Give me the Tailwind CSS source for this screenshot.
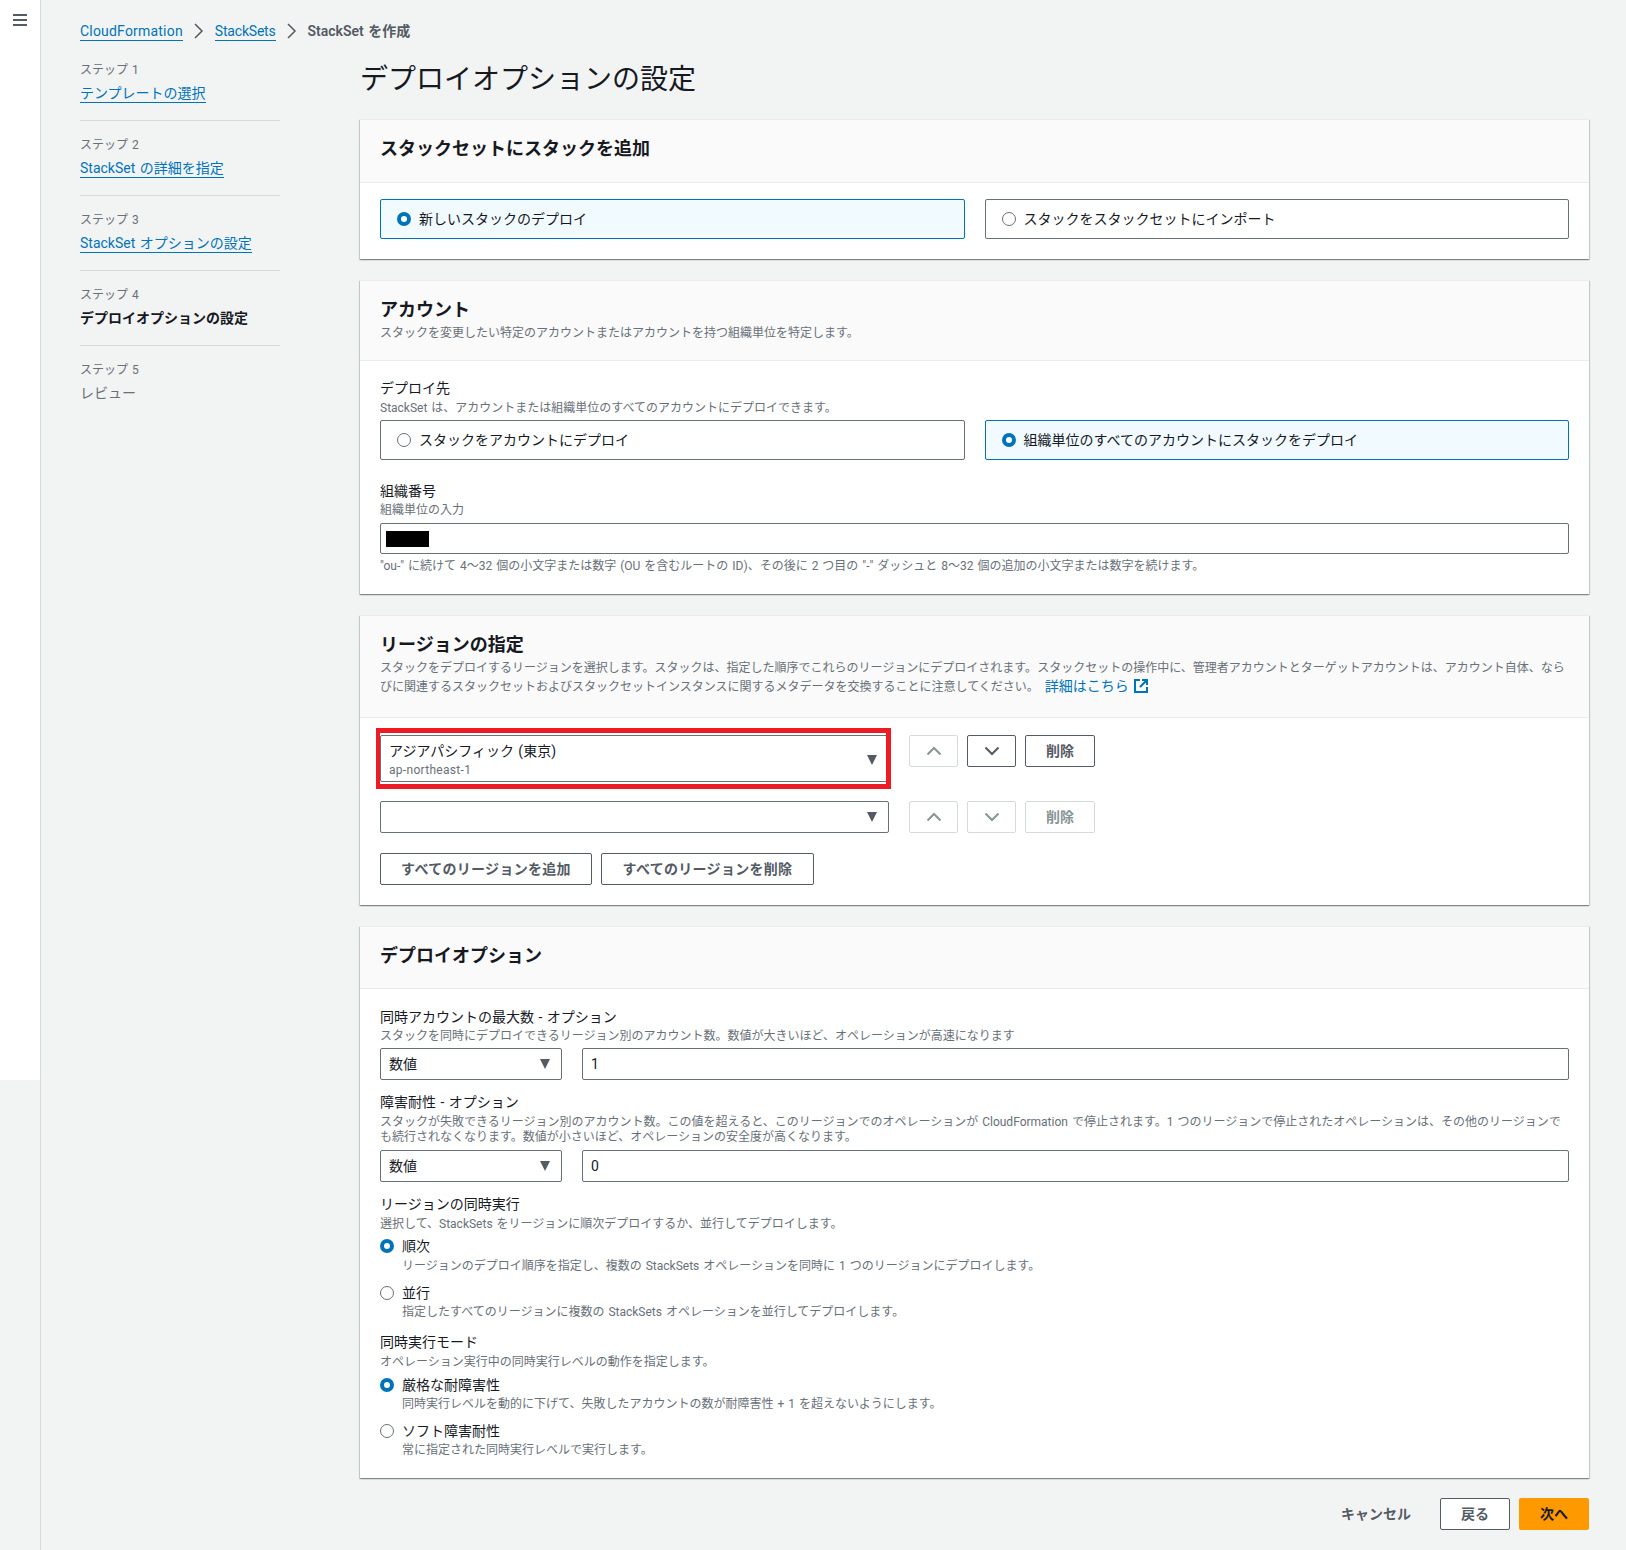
<!DOCTYPE html>
<html lang="ja">
<head>
    <meta charset="UTF-8">
    <meta name="viewport" content="width=device-width, initial-scale=1.0">
    <script src="https://cdn.jsdelivr.net/npm/@tailwindcss/browser@4"></script>
    <title>StackSet を作成</title>
</head>
<body class="bg-[#f2f3f3] text-[14px] leading-[20px] [word-spacing:1px] text-[#16191f] font-['Roboto','Noto_Sans_CJK_JP',sans-serif]">
    <div class="flex h-[1550px] overflow-hidden">
        <!-- Side rail -->
        <aside class="w-[41px] shrink-0 border-r border-[#d5dbdb]">
            <div class="h-[1080px] bg-white pt-[14px] pl-[13px]">
                <svg width="14" height="12" viewBox="0 0 14 12" fill="#545b64"><rect width="14" height="2"/><rect y="5" width="14" height="2"/><rect y="10" width="14" height="2"/></svg>
            </div>
        </aside>

        <div class="flex-1 pl-[39px] pr-[37px]">
            <!-- Breadcrumb -->
            <nav class="flex items-center h-[20px] mt-[21px]">
                <a href="#" class="leading-[18px] tracking-[0.2px] border-b border-[#0073bb] text-[#0073bb]">CloudFormation</a>
                <svg class="mx-[11px]" width="10" height="16" viewBox="0 0 10 16" fill="none" stroke="#545b64" stroke-width="1.5"><path d="M1 1l7 7-7 7"/></svg>
                <a href="#" class="leading-[18px] tracking-[-0.2px] border-b border-[#0073bb] text-[#0073bb]">StackSets</a>
                <svg class="mx-[11px]" width="10" height="16" viewBox="0 0 10 16" fill="none" stroke="#545b64" stroke-width="1.5"><path d="M1 1l7 7-7 7"/></svg>
                <span class="font-semibold text-[#545b64]">StackSet を作成</span>
            </nav>

            <div class="flex mt-[18px]">
                <!-- Wizard steps -->
                <ol class="w-[200px] shrink-0 mr-[80px]">
                    <li class="h-[62px] pt-[1px] border-b border-[#d5dbdb]">
                        <div class="text-[12px] text-[#687078]">ステップ 1</div>
                        <a href="#" class="inline-block mt-[4px] leading-[18px] border-b border-[#0073bb] text-[#0073bb]">テンプレートの選択</a>
                    </li>
                    <li class="h-[75px] pt-[14px] border-b border-[#d5dbdb]">
                        <div class="text-[12px] text-[#687078]">ステップ 2</div>
                        <a href="#" class="inline-block mt-[4px] leading-[18px] border-b border-[#0073bb] text-[#0073bb]">StackSet の詳細を指定</a>
                    </li>
                    <li class="h-[75px] pt-[14px] border-b border-[#d5dbdb]">
                        <div class="text-[12px] text-[#687078]">ステップ 3</div>
                        <a href="#" class="inline-block mt-[4px] leading-[18px] border-b border-[#0073bb] text-[#0073bb]">StackSet オプションの設定</a>
                    </li>
                    <li class="h-[75px] pt-[14px] border-b border-[#d5dbdb]">
                        <div class="text-[12px] text-[#687078]">ステップ 4</div>
                        <div class="mt-[3px] font-semibold">デプロイオプションの設定</div>
                    </li>
                    <li class="pt-[14px]">
                        <div class="text-[12px] text-[#687078]">ステップ 5</div>
                        <div class="mt-[3px] text-[#687078]">レビュー</div>
                    </li>
                </ol>

                <main class="flex-1 min-w-0">
                    <h1 class="h-[38px] text-[28px] leading-[42px] font-normal">デプロイオプションの設定</h1>

                    <!-- Add stacks -->
                    <section class="mt-[22px] bg-white border-t border-[#eaeded] shadow-[0_1px_1px_0_rgba(0,28,36,0.3),1px_1px_1px_0_rgba(0,28,36,0.15),-1px_1px_1px_0_rgba(0,28,36,0.15)]">
                        <header class="h-[63px] pt-[19px] px-[20px] bg-[#fafafa] border-b border-[#eaeded]">
                            <h2 class="text-[18px] leading-[20px] font-bold">スタックセットにスタックを追加</h2>
                        </header>
                        <div class="px-[20px] pt-[16px] pb-[20px] grid grid-cols-2 gap-[20px]">
                            <label class="flex items-center gap-[8px] h-[40px] pl-[16px] rounded-[2px] border border-[#0073bb] bg-[#f1faff]">
                                <span class="w-[14px] h-[14px] rounded-full bg-white border-[4px] border-[#0073bb]"></span>新しいスタックのデプロイ
                            </label>
                            <label class="flex items-center gap-[8px] h-[40px] pl-[16px] rounded-[2px] border border-[#687078]">
                                <span class="w-[14px] h-[14px] rounded-full bg-white border-[1.5px] border-[#687078]"></span>スタックをスタックセットにインポート
                            </label>
                        </div>
                    </section>

                    <!-- Accounts -->
                    <section class="mt-[21px] bg-white border-t border-[#eaeded] shadow-[0_1px_1px_0_rgba(0,28,36,0.3),1px_1px_1px_0_rgba(0,28,36,0.15),-1px_1px_1px_0_rgba(0,28,36,0.15)]">
                        <header class="h-[80px] pt-[19px] px-[20px] bg-[#fafafa] border-b border-[#eaeded]">
                            <h2 class="text-[18px] leading-[20px] font-bold">アカウント</h2>
                            <p class="mt-[5px] text-[12px] leading-[16px] text-[#687078]">スタックを変更したい特定のアカウントまたはアカウントを持つ組織単位を特定します。</p>
                        </header>
                        <div class="px-[20px] pt-[17px] pb-[20px]">
                            <div>デプロイ先</div>
                            <p class="mt-[2px] text-[12px] leading-[16px] text-[#687078]">StackSet は、アカウントまたは組織単位のすべてのアカウントにデプロイできます。</p>
                            <div class="mt-[4px] grid grid-cols-2 gap-[20px]">
                                <label class="flex items-center gap-[8px] h-[40px] pl-[16px] rounded-[2px] border border-[#687078]">
                                    <span class="w-[14px] h-[14px] rounded-full bg-white border-[1.5px] border-[#687078]"></span>スタックをアカウントにデプロイ
                                </label>
                                <label class="flex items-center gap-[8px] h-[40px] pl-[16px] rounded-[2px] border border-[#0073bb] bg-[#f1faff]">
                                    <span class="w-[14px] h-[14px] rounded-full bg-white border-[4px] border-[#0073bb]"></span>組織単位のすべてのアカウントにスタックをデプロイ
                                </label>
                            </div>
                            <div class="mt-[21px]">組織番号</div>
                            <p class="mt-[1px] text-[12px] leading-[16px] text-[#687078]">組織単位の入力</p>
                            <div class="mt-[5px] h-[31px] pl-[5px] flex items-center rounded-[2px] border border-[#687078] bg-white">
                                <span class="w-[43px] h-[16px] bg-black"></span>
                            </div>
                            <p class="mt-[4px] text-[12px] leading-[16px] text-[#687078]">"ou-" に続けて 4～32 個の小文字または数字 (OU を含むルートの ID)、その後に 2 つ目の "-" ダッシュと 8～32 個の追加の小文字または数字を続けます。</p>
                        </div>
                    </section>

                    <!-- Regions -->
                    <section class="mt-[21px] bg-white border-t border-[#eaeded] shadow-[0_1px_1px_0_rgba(0,28,36,0.3),1px_1px_1px_0_rgba(0,28,36,0.15),-1px_1px_1px_0_rgba(0,28,36,0.15)]">
                        <header class="h-[102px] pt-[19px] px-[20px] bg-[#fafafa] border-b border-[#eaeded]">
                            <h2 class="text-[18px] leading-[20px] font-bold">リージョンの指定</h2>
                            <p class="mt-[4px] text-[12px] leading-[19px] text-[#687078]">スタックをデプロイするリージョンを選択します。スタックは、指定した順序でこれらのリージョンにデプロイされます。スタックセットの操作中に、管理者アカウントとターゲットアカウントは、アカウント自体、ならびに関連するスタックセットおよびスタックセットインスタンスに関するメタデータを交換することに注意してください。 <a href="#" class="ml-[2px] text-[14px] leading-[16px] text-[#0073bb]">詳細はこちら <svg class="inline align-[-2px] ml-[1px]" width="14" height="14" viewBox="0 0 14 14" fill="none" stroke="#0073bb" stroke-width="2"><path d="M6 1H1v12h12V8M8 1h5v5M13 1L6 8"/></svg></a></p>
                        </header>
                        <div class="px-[20px] pt-[17px] pb-[20px]">
                            <div class="flex items-start">
                                <div class="relative w-[509px] h-[47px]">
                                    <div class="h-full pl-[8px] pt-[5px] rounded-[2px] border border-[#687078] bg-white">
                                        <div class="leading-[20px]">アジアパシフィック (東京)</div>
                                        <div class="text-[12px] leading-[16px] tracking-[0.3px] text-[#687078] mt-[1px]">ap-northeast-1</div>
                                    </div>
                                    <svg class="absolute right-[11px] top-[20px]" width="12" height="10" viewBox="0 0 12 10" fill="#545b64"><path d="M1 0h10L6 10z"/></svg>
                                    <!-- annotation box -->
                                    <div class="absolute left-[-4px] right-[-2px] top-[-7px] bottom-[-7px] border-[5px] border-l-[4px] border-[#ed1c24]"></div>
                                </div>
                                <div class="ml-[20px] flex gap-[9px]">
                                    <button class="w-[49px] h-[32px] flex items-center justify-center rounded-[2px] border border-[#d5dbdb] bg-white"><svg width="16" height="10" viewBox="0 0 16 10" fill="none" stroke="#879596" stroke-width="2"><path d="M1.5 8.5L8 2l6.5 6.5"/></svg></button>
                                    <button class="w-[49px] h-[32px] flex items-center justify-center rounded-[2px] border border-[#545b64] bg-white"><svg width="16" height="10" viewBox="0 0 16 10" fill="none" stroke="#545b64" stroke-width="2"><path d="M1.5 1.5L8 8l6.5-6.5"/></svg></button>
                                    <button class="w-[70px] h-[32px] rounded-[2px] border border-[#545b64] bg-white font-semibold text-[#545b64]">削除</button>
                                </div>
                            </div>
                            <div class="flex items-start mt-[19px]">
                                <div class="relative w-[509px] h-[32px] rounded-[2px] border border-[#687078] bg-white">
                                    <svg class="absolute right-[10px] top-[10px]" width="12" height="10" viewBox="0 0 12 10" fill="#545b64"><path d="M1 0h10L6 10z"/></svg>
                                </div>
                                <div class="ml-[20px] flex gap-[9px]">
                                    <button class="w-[49px] h-[32px] flex items-center justify-center rounded-[2px] border border-[#d5dbdb] bg-white"><svg width="16" height="10" viewBox="0 0 16 10" fill="none" stroke="#879596" stroke-width="2"><path d="M1.5 8.5L8 2l6.5 6.5"/></svg></button>
                                    <button class="w-[49px] h-[32px] flex items-center justify-center rounded-[2px] border border-[#d5dbdb] bg-white"><svg width="16" height="10" viewBox="0 0 16 10" fill="none" stroke="#879596" stroke-width="2"><path d="M1.5 1.5L8 8l6.5-6.5"/></svg></button>
                                    <button class="w-[70px] h-[32px] rounded-[2px] border border-[#d5dbdb] bg-white font-semibold text-[#879596]">削除</button>
                                </div>
                            </div>
                            <div class="flex gap-[9px] mt-[20px]">
                                <button class="w-[212px] h-[32px] rounded-[2px] border border-[#545b64] bg-white font-semibold tracking-[0.3px] text-[#545b64]">すべてのリージョンを追加</button>
                                <button class="w-[213px] h-[32px] rounded-[2px] border border-[#545b64] bg-white font-semibold tracking-[0.3px] text-[#545b64]">すべてのリージョンを削除</button>
                            </div>
                        </div>
                    </section>

                    <!-- Deployment options -->
                    <section class="mt-[21px] bg-white border-t border-[#eaeded] shadow-[0_1px_1px_0_rgba(0,28,36,0.3),1px_1px_1px_0_rgba(0,28,36,0.15),-1px_1px_1px_0_rgba(0,28,36,0.15)]">
                        <header class="h-[62px] pt-[19px] px-[20px] bg-[#fafafa] border-b border-[#eaeded]">
                            <h2 class="text-[18px] leading-[20px] font-bold">デプロイオプション</h2>
                        </header>
                        <div class="px-[20px] pt-[18px] pb-[20px]">
                            <div>同時アカウントの最大数 - オプション</div>
                            <p class="mt-[1px] text-[12px] leading-[16px] text-[#687078]">スタックを同時にデプロイできるリージョン別のアカウント数。数値が大きいほど、オペレーションが高速になります</p>
                            <div class="flex gap-[20px] mt-[4px]">
                                <div class="relative w-[182px] h-[32px] pl-[8px] leading-[30px] rounded-[2px] border border-[#687078] bg-white">数値
                                    <svg class="absolute right-[10px] top-[10px]" width="12" height="10" viewBox="0 0 12 10" fill="#545b64"><path d="M1 0h10L6 10z"/></svg>
                                </div>
                                <input type="text" value="1" class="flex-1 h-[32px] pl-[8px] rounded-[2px] border border-[#687078] bg-white">
                            </div>
                            <div class="mt-[12px]">障害耐性 - オプション</div>
                            <p class="mt-[3px] text-[12px] leading-[15px] text-[#687078]">スタックが失敗できるリージョン別のアカウント数。この値を超えると、このリージョンでのオペレーションが CloudFormation で停止されます。1 つのリージョンで停止されたオペレーションは、その他のリージョンでも続行されなくなります。数値が小さいほど、オペレーションの安全度が高くなります。</p>
                            <div class="flex gap-[20px] mt-[5px]">
                                <div class="relative w-[182px] h-[32px] pl-[8px] leading-[30px] rounded-[2px] border border-[#687078] bg-white">数値
                                    <svg class="absolute right-[10px] top-[10px]" width="12" height="10" viewBox="0 0 12 10" fill="#545b64"><path d="M1 0h10L6 10z"/></svg>
                                </div>
                                <input type="text" value="0" class="flex-1 h-[32px] pl-[8px] rounded-[2px] border border-[#687078] bg-white">
                            </div>
                            <div class="mt-[12px]">リージョンの同時実行</div>
                            <p class="mt-[2px] text-[12px] leading-[16px] text-[#687078]">選択して、StackSets をリージョンに順次デプロイするか、並行してデプロイします。</p>
                            <div class="mt-[4px] flex items-center gap-[8px]"><span class="w-[14px] h-[14px] rounded-full bg-white border-[4px] border-[#0073bb]"></span>順次</div>
                            <p class="mt-[2px] pl-[22px] text-[12px] leading-[16px] text-[#687078]">リージョンのデプロイ順序を指定し、複数の StackSets オペレーションを同時に 1 つのリージョンにデプロイします。</p>
                            <div class="mt-[9px] flex items-center gap-[8px]"><span class="w-[14px] h-[14px] rounded-full bg-white border-[1.5px] border-[#687078]"></span>並行</div>
                            <p class="mt-[1px] pl-[22px] text-[12px] leading-[16px] text-[#687078]">指定したすべてのリージョンに複数の StackSets オペレーションを並行してデプロイします。</p>
                            <div class="mt-[12px]">同時実行モード</div>
                            <p class="mt-[2px] text-[12px] leading-[16px] text-[#687078]">オペレーション実行中の同時実行レベルの動作を指定します。</p>
                            <div class="mt-[5px] flex items-center gap-[8px]"><span class="w-[14px] h-[14px] rounded-full bg-white border-[4px] border-[#0073bb]"></span>厳格な耐障害性</div>
                            <p class="mt-[1px] pl-[22px] text-[12px] leading-[16px] text-[#687078]">同時実行レベルを動的に下げて、失敗したアカウントの数が耐障害性 + 1 を超えないようにします。</p>
                            <div class="mt-[9px] flex items-center gap-[8px]"><span class="w-[14px] h-[14px] rounded-full bg-white border-[1.5px] border-[#687078]"></span>ソフト障害耐性</div>
                            <p class="mt-[1px] pl-[22px] text-[12px] leading-[16px] text-[#687078]">常に指定された同時実行レベルで実行します。</p>
                        </div>
                    </section>

                    <!-- Footer actions -->
                    <div class="mt-[20px] flex items-center justify-end">
                        <a href="#" class="mr-[29px] font-semibold text-[#545b64]">キャンセル</a>
                        <button class="w-[70px] h-[32px] rounded-[2px] border border-[#545b64] bg-white font-semibold text-[#545b64]">戻る</button>
                        <button class="ml-[9px] w-[70px] h-[32px] rounded-[2px] bg-[#ff9900] font-semibold">次へ</button>
                    </div>
                </main>
            </div>
        </div>
    </div>
</body>
</html>
